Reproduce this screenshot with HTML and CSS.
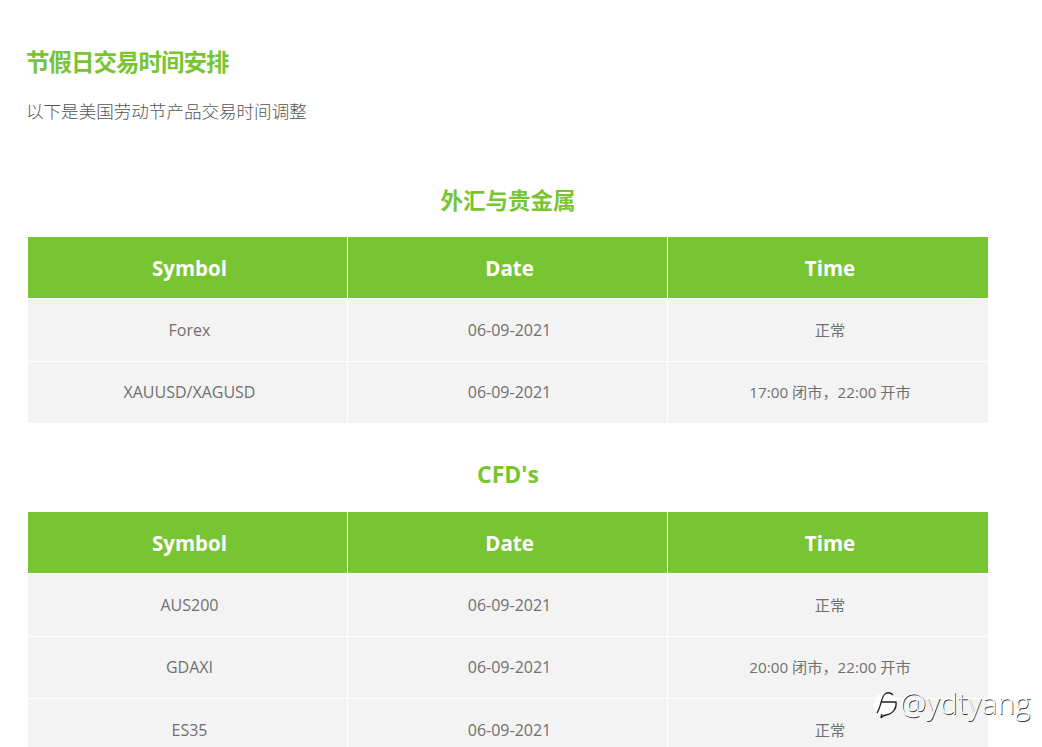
FILE: index.html
```html
<!DOCTYPE html>
<html lang="zh-CN">
<head>
<meta charset="utf-8">
<title>节假日交易时间安排</title>
<link rel="stylesheet" href="styles.css">
</head>
<body>
<main class="page">
  <h2 class="title">节假日交易时间安排</h2>
  <p class="intro">以下是美国劳动节产品交易时间调整</p>
  <h3 class="section">外汇与贵金属</h3>
  <table class="hours">
    <thead><tr><th>Symbol</th><th>Date</th><th>Time</th></tr></thead>
    <tbody>
      <tr><td>Forex</td><td>06-09-2021</td><td class="time">正常</td></tr>
      <tr><td>XAUUSD/XAGUSD</td><td>06-09-2021</td><td class="time">17:00 闭市，22:00 开市</td></tr>
    </tbody>
  </table>
  <h3 class="section section-next">CFD's</h3>
  <table class="hours">
    <thead><tr><th>Symbol</th><th>Date</th><th>Time</th></tr></thead>
    <tbody>
      <tr><td>AUS200</td><td>06-09-2021</td><td class="time">正常</td></tr>
      <tr><td>GDAXI</td><td>06-09-2021</td><td class="time">20:00 闭市，22:00 开市</td></tr>
      <tr><td>ES35</td><td>06-09-2021</td><td class="time">正常</td></tr>
    </tbody>
  </table>
</main>
<div class="watermark">
  <svg class="wm-icon" width="26" height="30" viewBox="0 0 26 30" aria-hidden="true">
    <circle class="wm-bubble" cx="12" cy="14" r="11.500"/>
    <path class="wm-line" d="M20 5C17 2 13 2 11 5 9 8 8 13 7 16 6 19 5.500 21 4 23"/>
    <path class="wm-line" d="M8 12H23C24 18 20 24 13 25 10 25.500 9 26 8 28 8 26 8.500 25 9 24"/>
  </svg>
  <span class="wm-text">@ydtyang</span>
</div>
</body>
</html>
```

FILE: styles.css
```css
html, body {
  margin: 0;
  padding: 0;
  height: 747px;
  overflow: hidden;
  background: #fff;
}

body {
  position: relative;
  font-family: "Open Sans", "Noto Sans CJK SC", sans-serif;
  color: #666;
}

.page {
  width: 962px;
  padding: 43px 0 0 27px;
}

.title {
  margin: 0 0 0 -1px;
  font-family: "Noto Sans CJK SC", sans-serif;
  font-size: 23.500px;
  line-height: 36px;
  font-weight: 700;
  letter-spacing: -1px;
  color: #78c534;
}

.intro {
  margin: 19px 0 0 -1px;
  font-family: "Noto Sans CJK SC", sans-serif;
  font-size: 17.560px;
  line-height: 26px;
  font-weight: 300;
  color: #555;
}

.section {
  margin: 57px 0 0;
  font-family: "Noto Sans CJK SC", "Open Sans", sans-serif;
  font-size: 22.500px;
  line-height: 36px;
  font-weight: 700;
  text-align: center;
  color: #78c534;
}

.section-next {
  margin-top: 32px;
  font-family: "Open Sans", "Noto Sans CJK SC", sans-serif;
  font-size: 23px;
}

.hours {
  width: 962px;
  margin-top: 19px;
  border-collapse: collapse;
  table-layout: fixed;
}

.hours th,
.hours td {
  box-sizing: border-box;
  border: 1px solid #fff;
  padding: 0 0 0 4px;
  text-align: center;
}

.hours th {
  height: 62px;
  background: #78c534;
  color: #fff;
  font-size: 20.500px;
  font-weight: 700;
}

.hours th:not(:last-child) {
  width: 320px;
}

.hours td {
  height: 62.500px;
  background: #f3f3f3;
  font-size: 16px;
  color: #707070;
}

.hours td.time {
  padding-bottom: 2px;
  font-size: 15.200px;
}

.watermark {
  position: absolute;
  left: 873px;
  top: 689px;
  display: flex;
  align-items: center;
  gap: 1px;
}

.wm-icon {
  flex: none;
}

.wm-bubble {
  fill: #fff;
  fill-opacity: 0.85;
}

.wm-line {
  fill: none;
  stroke: #222;
  stroke-width: 1.300;
}

.wm-text {
  margin-bottom: 4px;
  font-family: "Open Sans", sans-serif;
  font-size: 29.500px;
  font-weight: 300;
  line-height: 28px;
  letter-spacing: 0.2px;
  color: #fff;
  text-shadow: 0.7px 0.7px 0.6px #333;
}
```
